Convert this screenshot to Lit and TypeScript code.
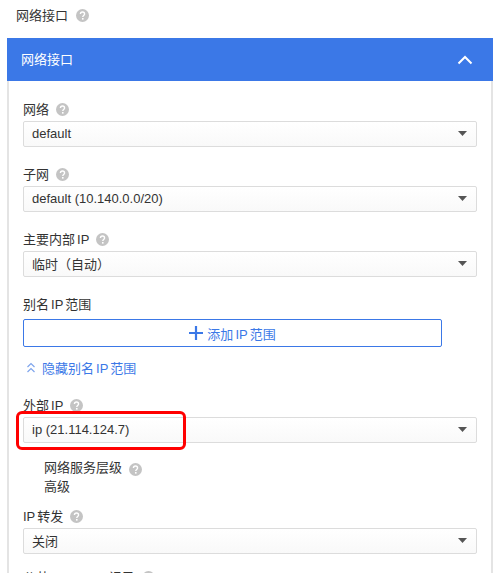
import { LitElement, html, css } from 'lit';
import { customElement } from 'lit/decorators.js';

const help = (size = 13) => html`
  <svg class="help" width=${size} height=${size} viewBox="0 0 24 24">
    <circle cx="12" cy="12" r="12" fill="#c4c4c4"></circle>
    <path d="M8.2 9.400a3.800 3.800 0 0 1 7.600 0c0 2.600-3.300 2.700-3.300 5.200" fill="none" stroke="#fff" stroke-width="2.600"></path>
    <rect x="11" y="16.600" width="3" height="3" fill="#fff"></rect>
  </svg>
`;

@customElement('app-root')
export class AppRoot extends LitElement {
  static styles = css`
    :host {
      display: block;
      height: 573px;
      overflow: hidden;
      background: #fff;
      color: #333;
      font-family: "Liberation Sans", Arial, "Noto Sans CJK SC", sans-serif;
      font-size: 13px;
    }
    .title {
      display: flex;
      align-items: center;
      gap: 8px;
      box-sizing: border-box;
      height: 30px;
      padding: 0 0 2px 16px;
    }
    .help {
      flex: none;
      margin-top: 2px;
    }
    .panel {
      margin: 8px 7px 0 7px;
      border-left: 2px solid #e4e4e4;
      border-right: 2px solid #e4e4e4;
    }
    .head {
      display: flex;
      align-items: center;
      justify-content: space-between;
      height: 43px;
      margin: 0 -2px;
      padding: 0 20px 0 14px;
      background: #3b78e7;
      color: #fff;
    }
    .head span {
      margin-bottom: 2px;
    }
    .body {
      padding: 17px 14px 0 14px;
    }
    .label {
      display: flex;
      align-items: center;
      gap: 7px;
      height: 20px;
      margin-bottom: 3px;
      word-spacing: -1.500px;
    }
    .select {
      display: flex;
      align-items: center;
      justify-content: space-between;
      box-sizing: border-box;
      height: 26px;
      margin-bottom: 16px;
      padding: 0 9px 1px 8px;
      border: 1px solid #dcdcdc;
      border-radius: 2px;
      background: linear-gradient(#fff, #f9f9f9);
    }
    .short {
      margin-bottom: 12px;
    }
    .plain {
      margin-bottom: 0;
    }
    .add {
      display: flex;
      align-items: center;
      justify-content: center;
      gap: 4px;
      box-sizing: border-box;
      width: 419px;
      height: 28px;
      margin-top: 6px;
      border: 1px solid #3b78e7;
      border-radius: 2px;
      color: #3b78e7;
      word-spacing: -1.500px;
    }
    .link {
      display: flex;
      align-items: center;
      gap: 7px;
      height: 20px;
      margin: 10px 0 17px 4px;
      color: #3b78e7;
      word-spacing: -1.500px;
    }
    .field {
      position: relative;
    }
    .mark {
      position: absolute;
      left: -7px;
      top: 17px;
      width: 170px;
      height: 39px;
      box-sizing: border-box;
      border: 3px solid #f00;
      border-radius: 6px;
    }
    .sub {
      margin: 2px 0 9px 21px;
      line-height: 18px;
    }
    .sub .label {
      height: 18px;
      margin-bottom: 1px;
    }
  `;

  render() {
    return html`
      <div class="title">网络接口 ${help()}</div>
      <div class="panel">
        <div class="head">
          <span>网络接口</span>
          <svg width="16" height="10" viewBox="0 0 16 10"><path d="M1.500 8.500 8 2l6.500 6.500" fill="none" stroke="#fff" stroke-width="2"></path></svg>
        </div>
        <div class="body">
          <div class="label">网络 ${help()}</div>
          ${this.select('default')}
          <div class="label">子网 ${help()}</div>
          ${this.select('default (10.140.0.0/20)')}
          <div class="label">主要内部 IP ${help()}</div>
          ${this.select('临时（自动）')}
          <div class="label plain">别名 IP 范围</div>
          <div class="add">
            <svg width="14" height="14" viewBox="0 0 14 14"><path d="M7 0v14M0 7h14" stroke="#3b78e7" stroke-width="2.200"></path></svg>
            添加 IP 范围
          </div>
          <div class="link">
            <svg width="8" height="11" viewBox="0 0 8 11"><path d="M.5 5 4 1.500 7.500 5M.5 10 4 6.500 7.500 10" fill="none" stroke="#7fa5ec" stroke-width="1.200"></path></svg>
            隐藏别名 IP 范围
          </div>
          <div class="field">
            <div class="label">外部 IP ${help()}</div>
            ${this.select('ip (21.114.124.7)')}
            <div class="mark"></div>
          </div>
          <div class="sub">
            <div class="label">网络服务层级 ${help()}</div>
            <div>高级</div>
          </div>
          <div class="label">IP 转发 ${help()}</div>
          ${this.select('关闭', 'short')}
          <div class="label">公共 DNS PTR 记录 ${help()}</div>
        </div>
      </div>
    `;
  }

  select(text: string, cls = '') {
    return html`
      <div class="select ${cls}">
        <span>${text}</span>
        <svg width="9" height="5" viewBox="0 0 9 5"><path d="M0 0h9L4.500 5z" fill="#555"></path></svg>
      </div>
    `;
  }
}
